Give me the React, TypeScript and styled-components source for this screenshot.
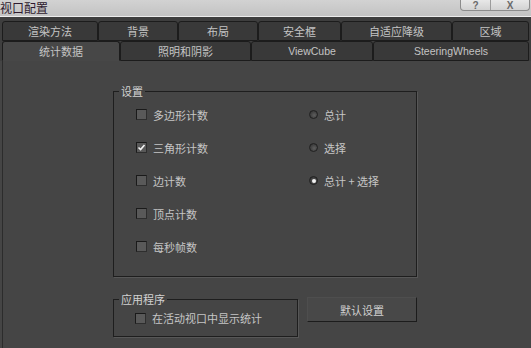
import React from "react";
import styled, { createGlobalStyle } from "styled-components";

const GlobalStyle = createGlobalStyle`
  html, body {
    margin: 0;
    padding: 0;
    background: #454545;
  }
  body {
    font-family: "Noto Sans CJK SC", "Noto Sans", sans-serif;
    font-size: 11px;
    color: #c8c8c8;
  }
`;

const Window = styled.div`
  width: 531px;
  height: 348px;
  overflow: hidden;
  display: flex;
  flex-direction: column;
  background: #454545;
`;

const TitleBar = styled.div`
  height: 16px;
  flex: none;
  display: flex;
  justify-content: space-between;
  align-items: flex-start;
  background: linear-gradient(#d2d2d2, #c3c3c3);
  border-bottom: 1px solid #ededed;
  overflow: hidden;
`;

const Title = styled.span`
  font-size: 12px;
  line-height: 15px;
  color: #2e1a2e;
`;

const CaptionButtons = styled.div`
  display: flex;
  height: 10px;
  margin-right: 1px;
  border: 1px solid #8c8c8c;
  border-top: none;
  border-radius: 0 0 4px 4px;
  background: linear-gradient(#e8e8e8, #d2d2d2);
  overflow: hidden;
`;

const CaptionButton = styled.span<{ $w: number }>`
  width: ${(p) => p.$w}px;
  display: flex;
  justify-content: center;
  align-items: flex-end;
  font: bold 10px "Liberation Sans", sans-serif;
  line-height: 9px;
  color: #6a6a6a;
  & + & {
    border-left: 1px solid #9c9c9c;
  }
`;

const TabStrip = styled.div`
  flex: none;
  display: flex;
  flex-direction: column;
  padding: 4px 2px 0 2px;
  background: #3e3e3e;
`;

const TabRow = styled.div`
  display: flex;
  height: 20px;
`;

const Tab = styled.div<{ $w: number; $active?: boolean; $latin?: boolean }>`
  box-sizing: border-box;
  width: ${(p) => p.$w}px;
  height: 20px;
  display: flex;
  align-items: center;
  justify-content: center;
  border: 1px solid #1c1c1c;
  border-bottom-color: ${(p) => (p.$active ? "#474747" : "#1c1c1c")};
  border-radius: 3px 3px 0 0;
  background: ${(p) => (p.$active ? "#474747" : "#393939")};
  color: #c4c4c4;
  font-family: ${(p) =>
    p.$latin ? '"Liberation Sans", sans-serif' : '"Noto Sans CJK SC", sans-serif'};
  font-size: ${(p) => (p.$latin ? 10.5 : 11)}px;
  white-space: nowrap;
`;

const Panel = styled.div`
  flex: 1;
  display: flex;
  flex-direction: column;
  margin-left: 2px;
  padding: 23px 0 0 110px;
  border-left: 1px solid #2c2c2c;
  background: #454545;
`;

const Group = styled.fieldset<{ $w: number; $h: number }>`
  box-sizing: border-box;
  width: ${(p) => p.$w}px;
  height: ${(p) => p.$h}px;
  margin: 0;
  padding: 0;
  border: 1px solid #1e1e1e;
  box-shadow: 1px 1px 0 #575757;
  min-inline-size: 0;
`;

const Legend = styled.legend`
  margin-left: 5px;
  padding: 0 2px;
  font-size: 11px;
  line-height: 14px;
  color: #d2d2d2;
`;

const Columns = styled.div`
  display: flex;
  padding-left: 22px;
`;

const Column = styled.div<{ $w?: number }>`
  display: flex;
  flex-direction: column;
  width: ${(p) => (p.$w ? `${p.$w}px` : "auto")};
`;

const Option = styled.label<{ $h?: number }>`
  height: ${(p) => p.$h ?? 33}px;
  display: flex;
  align-items: center;
  gap: 6px;
  color: #c6c6c6;
  white-space: nowrap;
`;

const Box = styled.span`
  box-sizing: border-box;
  width: 11px;
  height: 11px;
  display: flex;
  align-items: center;
  justify-content: center;
  border: 1px solid #1a1a1a;
  border-right-color: #2e2e2e;
  border-bottom-color: #2e2e2e;
  background: #595959;
`;

const Radio = styled.span<{ $on?: boolean }>`
  box-sizing: border-box;
  width: 9px;
  height: 9px;
  margin-left: 1px;
  border-radius: 50%;
  display: flex;
  align-items: center;
  justify-content: center;
  border: 1px solid #202020;
  background: radial-gradient(circle at 60% 60%, #5e5e5e, #2c2c2c);
  &::after {
    content: "";
    width: 4px;
    height: 4px;
    border-radius: 50%;
    background: ${(p) => (p.$on ? "#f2f2f2" : "transparent")};
  }
`;

const BottomRow = styled.div`
  display: flex;
  align-items: flex-start;
  gap: 9px;
  margin-top: 15px;
`;

const AppBody = styled.div`
  padding-left: 21px;
`;

const Button = styled.button`
  box-sizing: border-box;
  width: 110px;
  height: 25px;
  margin-top: 5px;
  padding: 0;
  border: 1px solid #1c1c1c;
  border-top-color: #4e4e4e;
  border-left-color: #4e4e4e;
  background: #484848;
  color: #d0d0d0;
  font-family: "Noto Sans CJK SC", "Noto Sans", sans-serif;
  font-size: 11px;
`;

const Check = ({ checked }: { checked?: boolean }) => (
  <Box>
    {checked && (
      <svg width="9" height="9" viewBox="0 0 9 9">
        <path d="M1.5 4.5 L3.6 6.6 L7.5 2" stroke="#f4f4f4" strokeWidth="1.6" fill="none" />
      </svg>
    )}
  </Box>
);

const row1 = [
  { label: "渲染方法", w: 96 },
  { label: "背景", w: 80 },
  { label: "布局", w: 80 },
  { label: "安全框", w: 83 },
  { label: "自适应降级", w: 111 },
  { label: "区域", w: 77 },
];

const row2 = [
  { label: "统计数据", w: 118, active: true },
  { label: "照明和阴影", w: 131 },
  { label: "ViewCube", w: 122, latin: true },
  { label: "SteeringWheels", w: 156, latin: true },
];

const checks = [
  { label: "多边形计数", checked: false },
  { label: "三角形计数", checked: true },
  { label: "边计数", checked: false },
  { label: "顶点计数", checked: false },
  { label: "每秒帧数", checked: false },
];

const radios = [
  { label: "总计", on: false },
  { label: "选择", on: false },
  { label: "总计 + 选择", on: true },
];

export default function App() {
  return (
    <>
      <GlobalStyle />
      <Window>
        <TitleBar>
          <Title>视口配置</Title>
          <CaptionButtons>
            <CaptionButton $w={29}>?</CaptionButton>
            <CaptionButton $w={38}>X</CaptionButton>
          </CaptionButtons>
        </TitleBar>
        <TabStrip>
          <TabRow>
            {row1.map((t) => (
              <Tab key={t.label} $w={t.w}>
                {t.label}
              </Tab>
            ))}
          </TabRow>
          <TabRow>
            {row2.map((t) => (
              <Tab key={t.label} $w={t.w} $active={t.active} $latin={t.latin}>
                {t.label}
              </Tab>
            ))}
          </TabRow>
        </TabStrip>
        <Panel>
          <Group $w={304} $h={193}>
            <Legend>设置</Legend>
            <Columns>
              <Column $w={172}>
                {checks.map((c) => (
                  <Option key={c.label}>
                    <Check checked={c.checked} />
                    {c.label}
                  </Option>
                ))}
              </Column>
              <Column>
                {radios.map((r) => (
                  <Option key={r.label}>
                    <Radio $on={r.on} />
                    {r.label}
                  </Option>
                ))}
              </Column>
            </Columns>
          </Group>
          <BottomRow>
            <Group $w={185} $h={45}>
              <Legend>应用程序</Legend>
              <AppBody>
                <Option $h={24}>
                  <Check />
                  在活动视口中显示统计
                </Option>
              </AppBody>
            </Group>
            <Button>默认设置</Button>
          </BottomRow>
        </Panel>
      </Window>
    </>
  );
}
